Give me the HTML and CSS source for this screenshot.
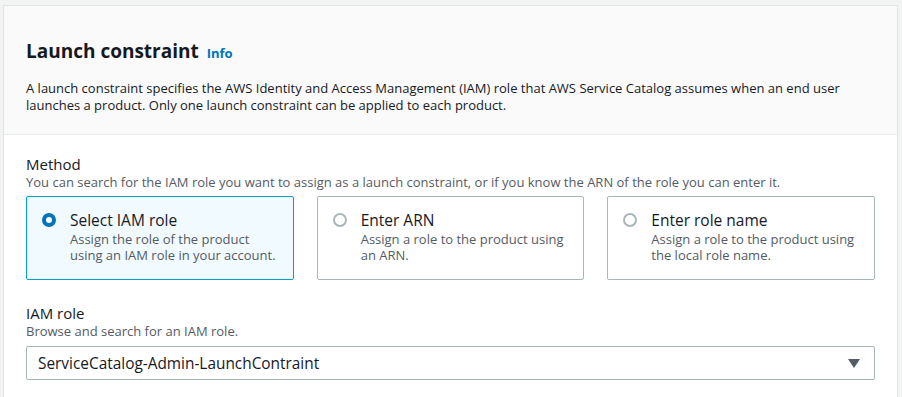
FILE: index.html
```html
<!DOCTYPE html>
<html lang="en">
  <head>
    <meta charset="UTF-8" />
    <meta name="viewport" content="width=device-width, initial-scale=1.0" />
    <link rel="stylesheet" href="styles.css">
  </head>
  <body>
    <div class="card">
      <div class="card-header">
        <h2 class="card-title">
          Launch constraint <a class="info-link" href="#">Info</a>
        </h2>
        <p class="card-desc">
          A launch constraint specifies the AWS Identity and Access Management (IAM) role that AWS Service Catalog assumes when an end user launches a product. Only one launch constraint can be applied to each product.
        </p>
      </div>

      <div class="card-body">
        <div class="field">
          <div class="field-label">Method</div>
          <div class="field-desc">
            You can search for the IAM role you want to assign as a launch constraint, or if you know the ARN of the role you can enter it.
          </div>
          <div class="tiles">
            <label class="tile selected">
              <span class="radio checked"></span>
              <span class="tile-text">
                <span class="tile-label">Select IAM role</span>
                <span class="tile-desc">Assign the role of the product using an IAM role in your account.</span>
              </span>
            </label>
            <label class="tile">
              <span class="radio"></span>
              <span class="tile-text">
                <span class="tile-label">Enter ARN</span>
                <span class="tile-desc">Assign a role to the product using an ARN.</span>
              </span>
            </label>
            <label class="tile">
              <span class="radio"></span>
              <span class="tile-text">
                <span class="tile-label">Enter role name</span>
                <span class="tile-desc">Assign a role to the product using the local role name.</span>
              </span>
            </label>
          </div>
        </div>

        <div class="field">
          <div class="field-label">IAM role</div>
          <div class="field-desc">Browse and search for an IAM role.</div>
          <div class="select">
            <span class="select-value">ServiceCatalog-Admin-LaunchContraint</span>
            <svg class="caret" width="12" height="9" viewBox="0 0 12 9">
              <path d="M0 0 H12 L6 9 Z" fill="#545b64" />
            </svg>
          </div>
        </div>
      </div>
    </div>
  </body>
</html>
```

FILE: styles.css
```css
body {
  font-family: "Open Sans", sans-serif;
  background-color: #f2f3f3;
  color: #16191f;
  margin: 0;
  padding: 5px 4px 0 3px;
}

.card {
  background-color: #fff;
  border: 1px solid #e1e4e4;
  border-bottom: none;
  height: 400px;
  overflow: hidden;
}

.card-header {
  background-color: #fafafa;
  border-bottom: 1px solid #eaeded;
  padding: 33px 22px 20px;
}

.card-title {
  margin: 0;
  font-size: 19px;
  font-weight: 700;
  line-height: 24px;
}

.info-link {
  color: #0073bb;
  font-size: 13px;
  font-weight: 700;
  text-decoration: none;
  margin-left: 3px;
}

.card-desc {
  margin: 15px 0 0;
  font-size: 13px;
  line-height: 17px;
  color: #16191f;
}

.card-body {
  padding: 19px 22px 0;
}

.field {
  margin-bottom: 23px;
}

.field-label {
  font-size: 15px;
  line-height: 20px;
}

.field-desc {
  font-size: 13px;
  line-height: 17px;
  color: #545b64;
  margin-bottom: 5px;
}

.field:last-child .field-desc {
  margin-bottom: 6px;
}

.tiles {
  display: grid;
  grid-template-columns: repeat(3, 1fr);
  gap: 23px;
}

.tile {
  display: flex;
  gap: 14px;
  padding: 13px 10px 16px 15px;
  border: 1px solid #aab7b8;
  border-radius: 2px;
  background-color: #fff;
}

.tile.selected {
  background-color: #f1faff;
  border-color: #00a1c9;
}

.radio {
  flex: none;
  box-sizing: border-box;
  width: 14px;
  height: 14px;
  margin-top: 3px;
  border: 2px solid #aab7b8;
  border-radius: 50%;
  background-color: #fff;
}

.radio.checked {
  border: 4px solid #0073bb;
}

.tile-text {
  display: flex;
  flex-direction: column;
}

.tile-label {
  font-size: 15.5px;
  line-height: 20px;
}

.tile-desc {
  margin-top: 1px;
  font-size: 13px;
  line-height: 16px;
  color: #545b64;
}

.select {
  display: flex;
  align-items: center;
  justify-content: space-between;
  height: 32px;
  padding: 0 14px 0 11px;
  border: 1px solid #aab7b8;
  border-radius: 2px;
}

.select-value {
  font-size: 15.4px;
}
```
